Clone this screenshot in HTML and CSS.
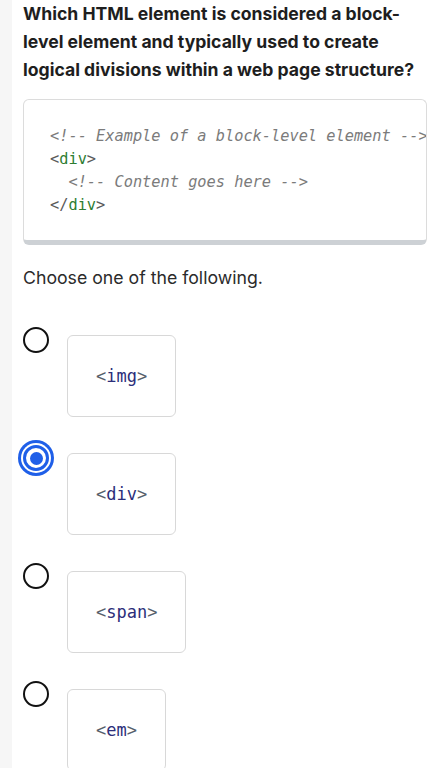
FILE: index.html
```html
<!DOCTYPE html>
<html lang="en">
<head>
<meta charset="utf-8">
<title>Quiz question</title>
<link rel="stylesheet" href="styles.css">
</head>
<body>
<div class="page">
  <div class="rail"></div>
  <main class="main">
    <h1 class="question">Which HTML element is considered a block-level element and typically used to create logical divisions within a web page structure?</h1>
    <div class="code-box">
<pre class="code"><span class="c-com">&lt;!-- Example of a block-level element --&gt;</span>
<span class="c-pun">&lt;</span><span class="c-tag">div</span><span class="c-pun">&gt;</span>
  <span class="c-com">&lt;!-- Content goes here --&gt;</span>
<span class="c-pun">&lt;/</span><span class="c-tag">div</span><span class="c-pun">&gt;</span></pre>
    </div>
    <p class="prompt">Choose one of the following.</p>
    <ul class="options">
      <li class="option">
        <span class="radio"></span>
        <div class="opt-box"><code class="opt-code"><span class="o-pun">&lt;</span>img<span class="o-pun">&gt;</span></code></div>
      </li>
      <li class="option">
        <span class="radio radio-on"></span>
        <div class="opt-box"><code class="opt-code"><span class="o-pun">&lt;</span>div<span class="o-pun">&gt;</span></code></div>
      </li>
      <li class="option">
        <span class="radio"></span>
        <div class="opt-box"><code class="opt-code"><span class="o-pun">&lt;</span>span<span class="o-pun">&gt;</span></code></div>
      </li>
      <li class="option">
        <span class="radio"></span>
        <div class="opt-box"><code class="opt-code"><span class="o-pun">&lt;</span>em<span class="o-pun">&gt;</span></code></div>
      </li>
    </ul>
  </main>
</div>
</body>
</html>
```

FILE: styles.css
```css
* { box-sizing: border-box; }

html, body {
  margin: 0;
  padding: 0;
  background: #ffffff;
}

body {
  font-family: Inter, "Liberation Sans", sans-serif;
  color: #1f1f1f;
}

.page {
  display: flex;
  min-height: 100vh;
}

.rail {
  flex: 0 0 12px;
  background: #f6f6f6;
}

.main {
  flex: 1 1 auto;
  min-width: 0;
  padding: 0 4px 0 11px;
}

.question {
  margin: 0;
  font-size: 17.6px;
  font-weight: 700;
  line-height: 28px;
  color: #1e1e1e;
}

.code-box {
  margin-top: 15px;
  border: 1px solid #dcdcdc;
  border-bottom: 5px solid #cdd1d5;
  border-radius: 6px;
  padding: 25px 0 23px 26px;
  overflow: hidden;
}

.code {
  margin: 0;
  font-family: "DejaVu Sans Mono", "Liberation Mono", monospace;
  font-size: 15.3px;
  line-height: 23px;
  white-space: pre;
  color: #555;
}

.c-com {
  font-style: italic;
  color: #7b7b7b;
}

.c-pun { color: #5a5a5a; }
.c-tag { color: #2e7d32; }

.prompt {
  margin: 19px 0 0;
  font-size: 17.7px;
  line-height: 28px;
  color: #2b2b2b;
}

.options {
  list-style: none;
  margin: 35px 0 0;
  padding: 0;
  display: flex;
  flex-direction: column;
  gap: 28px;
}

.option {
  display: flex;
  align-items: flex-start;
  gap: 18px;
}

.radio {
  flex: 0 0 26px;
  width: 26px;
  height: 26px;
  border: 2.5px solid #111;
  border-radius: 50%;
  background: #fff;
  position: relative;
}

.radio-on {
  border: 3px solid #1f5fe8;
  box-shadow: 0 0 0 2px #ffffff, 0 0 0 5px #1f5fe8;
}

.radio-on::after {
  content: "";
  position: absolute;
  left: 50%;
  top: 50%;
  width: 13px;
  height: 13px;
  margin: -6.5px 0 0 -6.5px;
  border-radius: 50%;
  background: #1f5fe8;
}

.opt-box {
  margin-top: 8px;
  border: 1px solid #d8d8d8;
  border-radius: 6px;
  padding: 28px 28px;
}

.opt-code {
  display: block;
  font-family: "DejaVu Sans Mono", "Liberation Mono", monospace;
  font-size: 17px;
  line-height: 24px;
  color: #2c2e7a;
}

.o-pun { color: #56606b; }
```
